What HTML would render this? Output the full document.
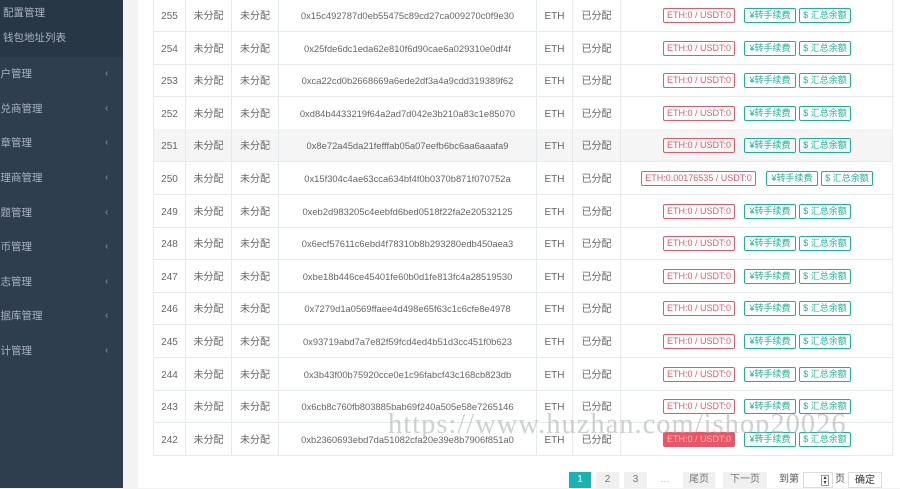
<!DOCTYPE html>
<html><head><meta charset="utf-8"><style>
*{margin:0;padding:0;box-sizing:border-box}
body{width:900px;height:488px;overflow:hidden;background:#f3f3f4;font-family:"Liberation Sans","Noto Sans CJK SC",sans-serif;font-size:10px;color:#666;position:relative}
.sb{position:absolute;left:0;top:0;width:123px;height:488px;background:#2f3e4e}
.sbtop{position:absolute;left:0;top:0;width:123px;height:57px;background:#283745}
.si{position:absolute;color:#a7b1c2;font-size:10.5px;line-height:14px;white-space:nowrap}
.chev{position:absolute;left:105px;color:#8a95a5;font-size:10px;line-height:14px}
.panel{position:absolute;left:138px;top:0;width:762px;height:488px;background:#fff}
.row{position:absolute;left:153px;width:740px;height:33px;border-bottom:1px solid #e7eaec;border-left:1px solid #e7eaec;border-right:1px solid #e7eaec}
.row.g{background:#f5f5f5}
.c{position:absolute;top:0;height:32px;line-height:35px;border-right:1px solid #e7eaec;text-align:center;white-space:nowrap}
.a{font-size:9.4px;line-height:34px}
.b{position:absolute;top:9px;height:15px;border:1px solid;border-radius:2px;font-size:9px;line-height:13px;text-align:center;white-space:nowrap;overflow:hidden}
.r{border-color:#ed5565;color:#ed5565}
.t{border-color:#1ab394;color:#1ab394}
.pg{position:absolute;top:472px;height:16px;background:#f0f0f0;color:#777;font-size:10px;line-height:16px;text-align:center}
.wm{position:absolute;left:388px;top:409px;font-family:"Liberation Serif",serif;font-size:28.5px;color:rgba(170,170,170,.55);letter-spacing:1px;white-space:nowrap}
</style></head><body>
<div class="sb"></div><div class="sbtop"></div>
<div class="si" style="left:3px;top:6px">配置管理</div>
<div class="si" style="left:3px;top:31px">钱包地址列表</div>
<div class="si" style="left:-10px;top:67px">商户管理</div><div class="chev" style="top:67px">‹</div>
<div class="si" style="left:-10px;top:102px">承兑商管理</div><div class="chev" style="top:102px">‹</div>
<div class="si" style="left:-10px;top:136px">文章管理</div><div class="chev" style="top:136px">‹</div>
<div class="si" style="left:-10px;top:171px">代理商管理</div><div class="chev" style="top:171px">‹</div>
<div class="si" style="left:-10px;top:206px">问题管理</div><div class="chev" style="top:206px">‹</div>
<div class="si" style="left:-10px;top:240px">提币管理</div><div class="chev" style="top:240px">‹</div>
<div class="si" style="left:-10px;top:275px">日志管理</div><div class="chev" style="top:275px">‹</div>
<div class="si" style="left:-10px;top:309px">数据库管理</div><div class="chev" style="top:309px">‹</div>
<div class="si" style="left:-10px;top:344px">统计管理</div><div class="chev" style="top:344px">‹</div>
<div class="panel"></div>
<div id="rows"></div>
<script>
var d=[[255,"0x15c492787d0eb55475c89cd27ca009270c0f9e30"],[254,"0x25fde6dc1eda62e810f6d90cae6a029310e0df4f"],[253,"0xca22cd0b2668669a6ede2df3a4a9cdd319389f62"],[252,"0xd84b4433219f64a2ad7d042e3b210a83c1e85070"],[251,"0x8e72a45da21fefffab05a07eefb6bc6aa6aaafa9"],[250,"0x15f304c4ae63cca634bf4f0b0370b871f070752a"],[249,"0xeb2d983205c4eebfd6bed0518f22fa2e20532125"],[248,"0x6ecf57611c6ebd4f78310b8b293280edb450aea3"],[247,"0xbe18b446ce45401fe60b0d1fe813fc4a28519530"],[246,"0x7279d1a0569ffaee4d498e65f63c1c6cfe8e4978"],[245,"0x93719abd7a7e82f59fcd4ed4b51d3cc451f0b623"],[244,"0x3b43f00b75920cce0e1c96fabcf43c168cb823db"],[243,"0x6cb8c760fb803885bab69f240a505e58e7265146"],[242,"0xb2360693ebd7da51082cfa20e39e8b7906f851a0"]];
var h="";
d.forEach(function(x,i){var top=Math.round(-1+i*32.6);var w=x[0]==250;
h+='<div class="row'+(i==4?' g':'')+'" style="top:'+top+'px">'+
'<div class="c" style="left:0;width:32px">'+x[0]+'</div>'+
'<div class="c" style="left:32px;width:46px">未分配</div>'+
'<div class="c" style="left:78px;width:47px">未分配</div>'+
'<div class="c a" style="left:125px;width:258px">'+x[1]+'</div>'+
'<div class="c" style="left:383px;width:36px">ETH</div>'+
'<div class="c" style="left:419px;width:48px">已分配</div>'+
(w?'<div class="b r" style="left:487px;width:115px">ETH:0.00176535 / USDT:0</div><div class="b t" style="left:612px;width:52px">¥转手续费</div><div class="b t" style="left:667px;width:52px">$ 汇总余额</div>'
:(x[0]==242?'<div class="b r" style="left:509px;width:72px;background:#ed5565;color:#fbb">ETH:0 / USDT:0</div>':'<div class="b r" style="left:509px;width:72px">ETH:0 / USDT:0</div>')+'<div class="b t" style="left:590px;width:52px">¥转手续费</div><div class="b t" style="left:645px;width:52px">$ 汇总余额</div>')+
'</div>';});
document.getElementById("rows").innerHTML=h;
</script>
<div class="wm">https://www.huzhan.com/ishop20026</div>
<div class="pg" style="left:569px;width:22px;background:#1ab3b3;color:#fff">1</div>
<div class="pg" style="left:596px;width:23px">2</div>
<div class="pg" style="left:624px;width:23px">3</div>
<div class="pg" style="left:655px;width:20px;background:none;color:#bbb">…</div>
<div class="pg" style="left:683px;width:32px">尾页</div>
<div class="pg" style="left:723px;width:44px">下一页</div>
<div class="pg" style="left:776px;width:26px;background:none;color:#555">到第</div>
<div style="position:absolute;left:803px;top:472px;width:30px;height:16px;border:1px solid #ddd;background:#fff"><div style="position:absolute;right:3px;top:2px;width:8px;height:11px;border:1px solid #999;font-size:6px;line-height:5px;text-align:center;color:#333">▴<br>▾</div></div>
<div class="pg" style="left:833px;width:14px;background:none;color:#555">页</div>
<div class="pg" style="left:848px;width:34px;background:#fff;border:1px solid #ddd;color:#333">确定</div>
</body></html>
